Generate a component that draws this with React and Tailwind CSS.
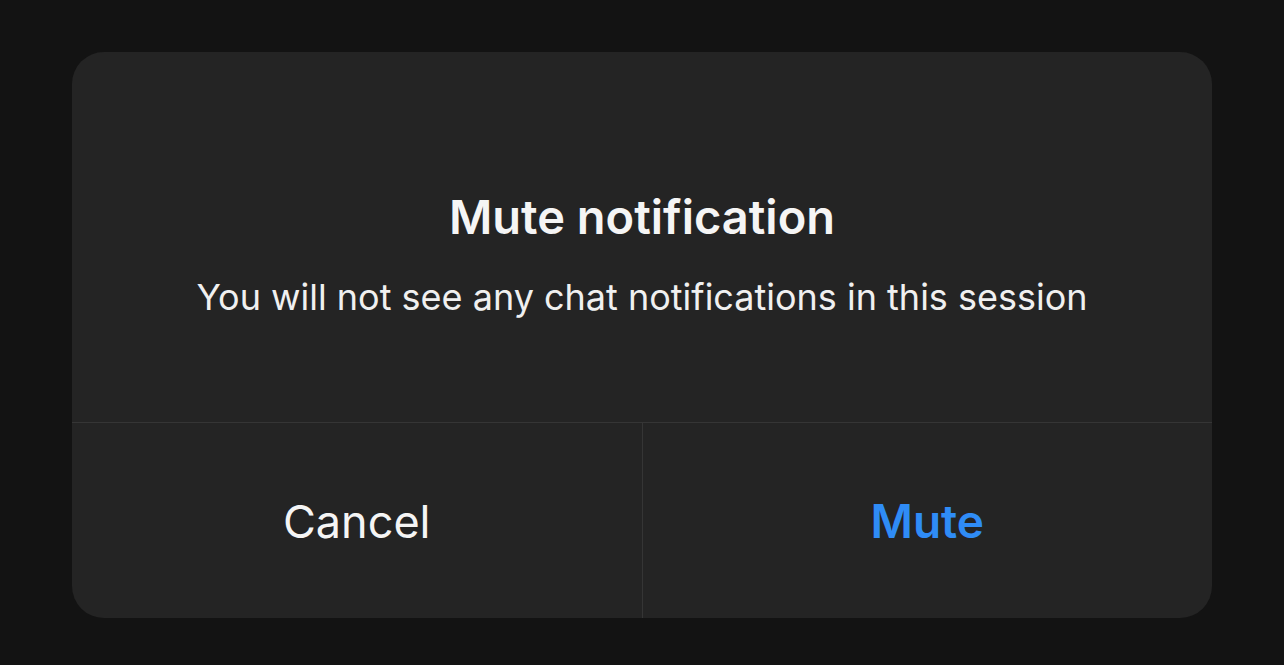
import React from 'react';

const App = () => {
  return (
    <div
      className="w-full h-[665px] bg-[#131313] flex items-start justify-center pt-[52px]"
      style={{ fontFamily: 'Inter, "Noto Sans", sans-serif' }}
    >
      <div className="w-[1140px] h-[566px] bg-[#242424] rounded-[32px] overflow-hidden flex flex-col">
        <div className="h-[371px] flex flex-col items-center pt-[137px] border-b border-[#353535]">
          <h1 className="text-[47px] leading-[56px] font-semibold text-[#f5f5f5]">
            Mute notification
          </h1>
          <p className="mt-[30px] text-[36px] leading-[44px] text-[#f0f0f0]">
            You will not see any chat notifications in this session
          </p>
        </div>
        <div className="flex-1 flex">
          <button className="flex-1 flex items-center justify-center pt-[2px] text-[45px] text-[#f5f5f5] border-r border-[#353535]">
            Cancel
          </button>
          <button className="flex-1 flex items-center justify-center pt-[2px] text-[46px] font-semibold text-[#2f8cf6]">
            Mute
          </button>
        </div>
      </div>
    </div>
  );
};

export default App;
